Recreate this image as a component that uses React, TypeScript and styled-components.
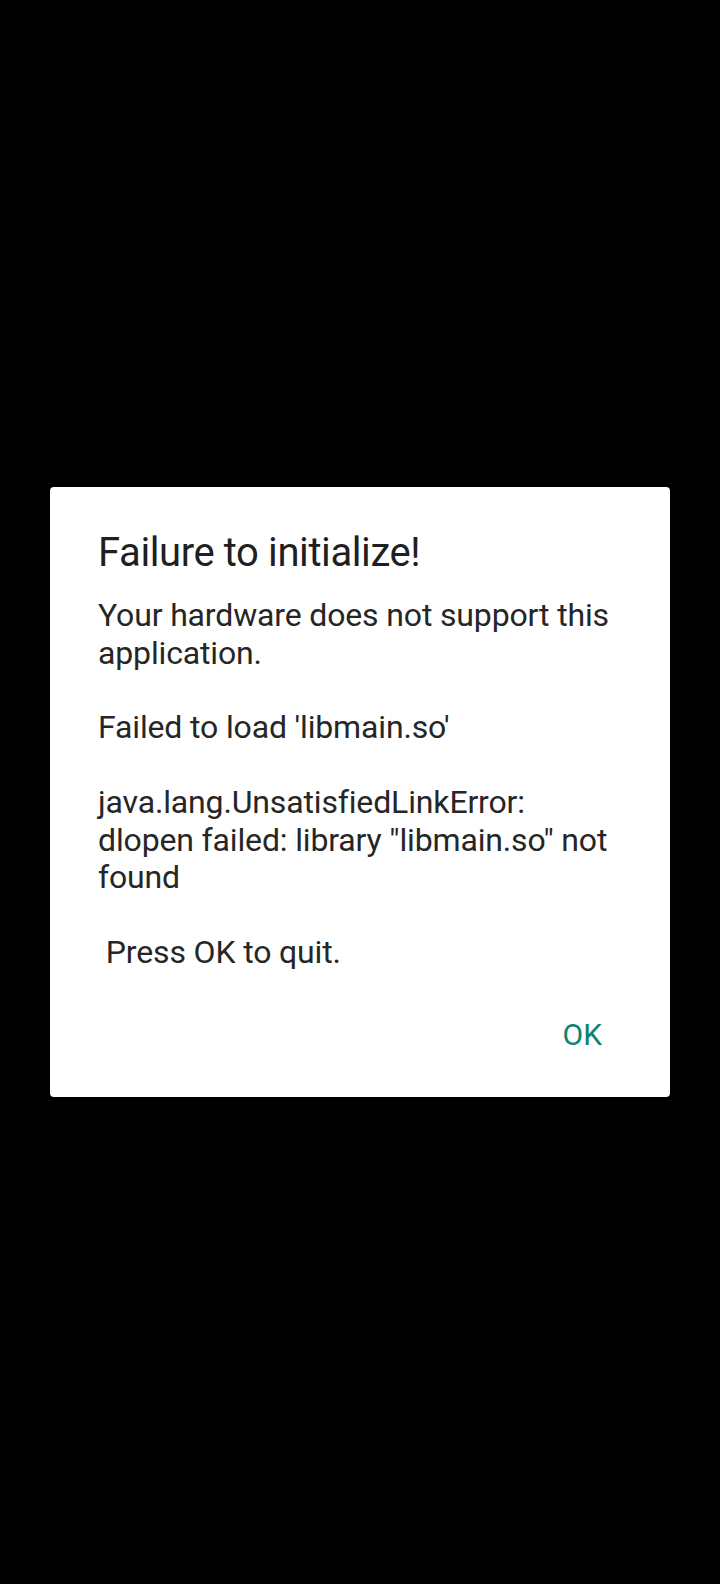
import styled, { createGlobalStyle } from "styled-components";

const GlobalStyle = createGlobalStyle`
  html, body {
    margin: 0;
    padding: 0;
    background: #000;
  }
`;

const Screen = styled.div`
  width: 720px;
  height: 1584px;
  background: #000;
  display: flex;
  align-items: center;
  justify-content: center;
`;

const Dialog = styled.div`
  width: 620px;
  box-sizing: border-box;
  background: #fff;
  border-radius: 4px;
  padding: 42px 48px 43px 48px;
  display: flex;
  flex-direction: column;
  font-family: Roboto, "Noto Sans", sans-serif;
`;

const Title = styled.h1`
  margin: 0 0 20px 0;
  font-size: 40px;
  font-weight: 400;
  line-height: 48px;
  letter-spacing: -0.4px;
  color: #1f1f1f;
`;

const Message = styled.p`
  margin: 0;
  font-size: 32px;
  line-height: 37.4px;
  letter-spacing: -0.15px;
  color: #262626;
  white-space: pre-wrap;
`;

const Actions = styled.div`
  display: flex;
  justify-content: flex-end;
  margin-top: 45px;
`;

const TextButton = styled.button`
  border: none;
  background: none;
  padding: 0 20px;
  font-family: Roboto, "Noto Sans", sans-serif;
  font-size: 30px;
  line-height: 37.5px;
  color: #0b8370;
  cursor: pointer;
`;

const message =
  "Your hardware does not support this application.\n\nFailed to load 'libmain.so'\n\njava.lang.UnsatisfiedLinkError: dlopen failed: library \"libmain.so\" not found\n\n Press OK to quit.";

export default function App() {
  return (
    <>
      <GlobalStyle />
      <Screen>
        <Dialog>
          <Title>Failure to initialize!</Title>
          <Message>{message}</Message>
          <Actions>
            <TextButton>OK</TextButton>
          </Actions>
        </Dialog>
      </Screen>
    </>
  );
}
